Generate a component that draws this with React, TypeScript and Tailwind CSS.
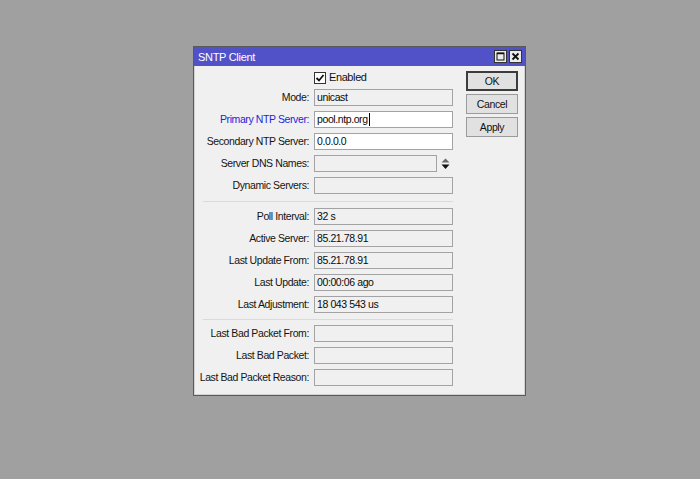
import React from 'react';

type Field = {
  label: string;
  value?: string;
  editable?: boolean;
  blue?: boolean;
  cursor?: boolean;
  spinner?: boolean;
};

const general: Field[] = [
  { label: 'Mode:', value: 'unicast' },
  { label: 'Primary NTP Server:', value: 'pool.ntp.org', editable: true, blue: true, cursor: true },
  { label: 'Secondary NTP Server:', value: '0.0.0.0', editable: true },
  { label: 'Server DNS Names:', spinner: true },
  { label: 'Dynamic Servers:' },
];

const status: Field[] = [
  { label: 'Poll Interval:', value: '32 s' },
  { label: 'Active Server:', value: '85.21.78.91' },
  { label: 'Last Update From:', value: '85.21.78.91' },
  { label: 'Last Update:', value: '00:00:06 ago' },
  { label: 'Last Adjustment:', value: '18 043 543 us' },
];

const badPackets: Field[] = [
  { label: 'Last Bad Packet From:' },
  { label: 'Last Bad Packet:' },
  { label: 'Last Bad Packet Reason:' },
];

const Spinner = () => (
  <svg width="9" height="12" viewBox="0 0 9 12" className="ml-[4px]">
    <polygon points="4.5,0.5 0.5,4.5 8.5,4.5" fill="#6a6a6a" />
    <polygon points="0.5,6.5 8.5,6.5 4.5,11" fill="#111" />
  </svg>
);

const Row = ({ field }: { field: Field }) => (
  <div className="flex items-center h-[17px]">
    {/* labels are right aligned and may run a little past the left edge */}
    <div
      className={`w-[106px] flex justify-end whitespace-nowrap ${
        field.blue ? 'text-[#2424dc]' : 'text-[#141414]'
      }`}
    >
      <span>{field.label}</span>
    </div>
    <div className="ml-[5px] flex items-center">
      <div
        className={`h-[17px] flex items-center pl-[2px] border border-[#a3a3a3] whitespace-nowrap text-[#0a0a0a] ${
          field.spinner ? 'w-[123px]' : 'w-[139px]'
        } ${field.editable ? 'bg-white' : 'bg-[#f0f0f0]'}`}
      >
        {field.value}
        {field.cursor && <span className="w-px h-[13px] bg-black ml-px" />}
      </div>
      {field.spinner && <Spinner />}
    </div>
  </div>
);

const Button = ({ label, primary }: { label: string; primary?: boolean }) => (
  <div
    className={`w-[52px] h-[20px] flex items-center justify-center bg-[#e1e1e1] text-[#111] ${
      primary ? 'border-2 border-[#3c3c3c]' : 'border border-[#9a9a9a]'
    }`}
  >
    {label}
  </div>
);

export default function App() {
  return (
    <div className="w-[700px] h-[479px] bg-[#a0a0a0] pt-[46px] pl-[193px] font-['Liberation_Sans',Arial,sans-serif] text-[10.5px] tracking-[-0.4px] leading-none">
      <div className="w-[333px] h-[350px] border border-[#5a5a5a] flex flex-col bg-[#f0f0f0]">
        {/* title bar */}
        <div className="h-[19px] bg-[#5252c8] flex items-center pl-[4px] pr-[3px]">
          <span className="text-white text-[11px] tracking-[-0.3px] flex-1 pt-px">SNTP Client</span>
          <div className="flex gap-[2px]">
            <div className="w-[13px] h-[13px] bg-[#ececec] border border-[#333] flex items-center justify-center">
              <svg width="9" height="9" viewBox="0 0 9 9">
                <rect x="1" y="1" width="7" height="7" fill="none" stroke="#111" strokeWidth="1" />
                <line x1="1" y1="1.5" x2="8" y2="1.5" stroke="#111" strokeWidth="1.5" />
              </svg>
            </div>
            <div className="w-[13px] h-[13px] bg-[#ececec] border border-[#333] flex items-center justify-center">
              <svg width="9" height="9" viewBox="0 0 9 9">
                <path d="M1.5 1.5 L7.5 7.5 M7.5 1.5 L1.5 7.5" stroke="#111" strokeWidth="1.8" />
              </svg>
            </div>
          </div>
        </div>

        {/* body */}
        <div className="flex-1 flex pl-[8px] pr-[7px] border-x border-b border-[#d2d2d2]">
          <div className="w-[250px] pt-[3px] flex flex-col">
            <div className="flex items-center h-[17px] mb-[3px] pl-[111px]">
              <div className="w-[12px] h-[12px] border border-[#333] bg-white flex items-center justify-center">
                <svg width="10" height="10" viewBox="0 0 10 10">
                  <path d="M1.5 5 L4 7.5 L8.5 2" fill="none" stroke="#111" strokeWidth="1.8" />
                </svg>
              </div>
              <span className="ml-[3px] text-[#111] text-[11px]">Enabled</span>
            </div>

            <div className="flex flex-col gap-[5px]">
              {general.map((f) => (
                <Row key={f.label} field={f} />
              ))}
            </div>
            <div className="h-px bg-[#dadada] mt-[7px] mb-[6px]" />
            <div className="flex flex-col gap-[5px]">
              {status.map((f) => (
                <Row key={f.label} field={f} />
              ))}
            </div>
            <div className="h-px bg-[#dadada] mt-[6px] mb-[5px]" />
            <div className="flex flex-col gap-[5px]">
              {badPackets.map((f) => (
                <Row key={f.label} field={f} />
              ))}
            </div>
          </div>

          <div className="ml-[13px] pt-[5px] flex flex-col gap-[3px]">
            <Button label="OK" primary />
            <Button label="Cancel" />
            <Button label="Apply" />
          </div>
        </div>
      </div>
    </div>
  );
}
